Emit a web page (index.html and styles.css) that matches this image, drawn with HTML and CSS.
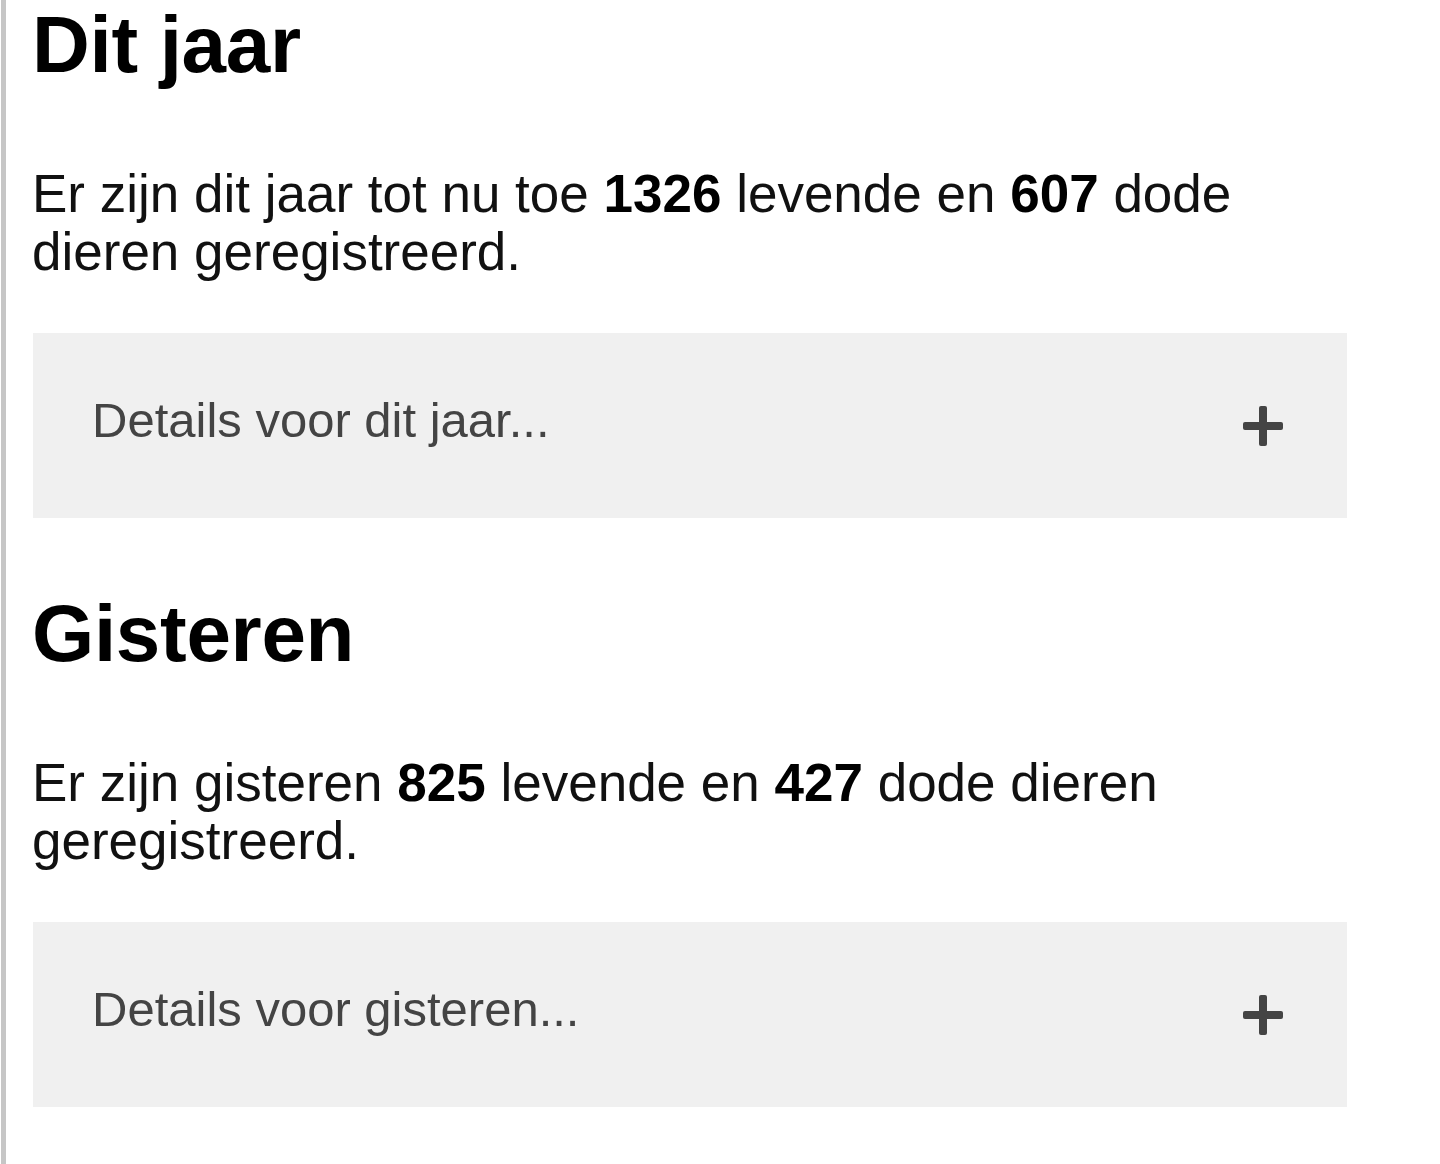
FILE: index.html
```html
<!DOCTYPE html>
<html lang="nl">
<head>
<meta charset="utf-8">
<title>Registraties</title>
<link rel="stylesheet" href="styles.css">
</head>
<body>
<div class="page">
  <section class="period">
    <h2 class="period-title">Dit jaar</h2>
    <p class="period-text">Er zijn dit jaar tot nu toe <strong>1326</strong> levende en <strong>607</strong> dode dieren geregistreerd.</p>
    <div class="details">
      <span class="details-label">Details voor dit jaar...</span>
      <svg class="details-plus" width="40" height="40" viewBox="0 0 40 40" aria-hidden="true">
        <rect x="0" y="16" width="40" height="8" rx="2"/>
        <rect x="16" y="0" width="8" height="40" rx="2"/>
      </svg>
    </div>
  </section>
  <section class="period">
    <h2 class="period-title">Gisteren</h2>
    <p class="period-text">Er zijn gisteren <strong>825</strong> levende en <strong>427</strong> dode dieren geregistreerd.</p>
    <div class="details">
      <span class="details-label">Details voor gisteren...</span>
      <svg class="details-plus" width="40" height="40" viewBox="0 0 40 40" aria-hidden="true">
        <rect x="0" y="16" width="40" height="8" rx="2"/>
        <rect x="16" y="0" width="8" height="40" rx="2"/>
      </svg>
    </div>
  </section>
</div>
</body>
</html>
```

FILE: styles.css
```css
html, body {
  margin: 0;
  padding: 0;
  background: #ffffff;
}

body {
  font-family: "Liberation Sans", Arial, Helvetica, sans-serif;
  color: #111111;
}

.page {
  margin-left: 1px;
  border-left: 5px solid #c6c6c6;
  padding-left: 26px;
  min-height: 1164px;
  box-sizing: border-box;
}

.period {
  width: 1315px;
}

.period + .period {
  margin-top: 71px;
}

.period-title {
  margin: 0;
  font-size: 80px;
  line-height: 90px;
  font-weight: 700;
  color: #000000;
  letter-spacing: -0.3px;
}

.period-text {
  margin: 75px 0 0 0;
  font-size: 53px;
  line-height: 58px;
}

.period-text strong {
  font-weight: 700;
  color: #000000;
}

.details {
  margin-top: 52px;
  margin-left: 1px;
  height: 185px;
  background: #f0f0f0;
  display: flex;
  align-items: center;
  padding: 0 64px 0 59px;
  box-sizing: border-box;
}

.details-label {
  flex: 1;
  font-size: 49px;
  line-height: 56px;
  padding-bottom: 12px;
  color: #444444;
}

.details-plus {
  fill: #444444;
  flex: none;
}
```
